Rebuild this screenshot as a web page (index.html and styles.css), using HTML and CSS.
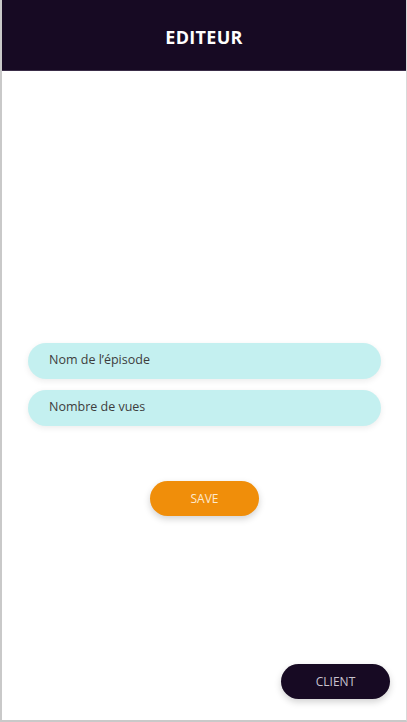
FILE: index.html
```html
<!DOCTYPE html>
<html lang="fr">
<head>
<meta charset="utf-8">
<title>Editeur</title>
<link rel="stylesheet" href="styles.css">
</head>
<body>
<div class="app">
  <header class="topbar"><h1 class="title">EDITEUR</h1></header>
  <main class="content">
    <form class="form">
      <input class="field" type="text" placeholder="Nom de l’épisode">
      <input class="field" type="text" placeholder="Nombre de vues">
      <button class="btn btn-save" type="button">SAVE</button>
    </form>
    <button class="btn btn-client" type="button">CLIENT</button>
  </main>
</div>
</body>
</html>
```
FILE: styles.css
```css
* { box-sizing: border-box; }
html, body { margin: 0; padding: 0; background: #fff; }
body { font-family: "Open Sans", "Noto Sans", sans-serif; }
.app {
  width: 407px;
  height: 722px;
  display: flex;
  flex-direction: column;
  border-left: 2px solid #c9c9c9;
  border-right: 1px solid #d9d9d9;
  border-bottom: 2px solid #c9c9c9;
}
.topbar {
  height: 71px;
  background: #170a23;
  border-bottom: 1px solid #3a2d48;
  display: flex;
  align-items: center;
  justify-content: center;
  padding-top: 3px;
}
.title {
  margin: 0;
  color: #fff;
  font-size: 18px;
  font-weight: 700;
  letter-spacing: 0.3px;
}
.content {
  flex: 1;
  display: flex;
  flex-direction: column;
  padding-top: 272px;
}
.form {
  display: flex;
  flex-direction: column;
  align-items: center;
  gap: 11px;
  padding: 0 25px 0 26px;
}
.field {
  width: 100%;
  height: 36px;
  border: none;
  border-radius: 18px;
  background: #c4f0f0;
  box-shadow: 0 2px 6px rgba(0,0,0,0.08);
  padding: 0 0 3px 21px;
  font-family: "Open Sans", sans-serif;
  font-size: 12.5px;
  color: #333;
  outline: none;
}
.field::placeholder { color: #3d3d3d; opacity: 1; }
.btn {
  width: 109px;
  height: 35px;
  border: none;
  border-radius: 18px;
  font-family: "Open Sans", sans-serif;
  font-size: 12px;
  font-weight: 400;
  box-shadow: 0 3px 7px rgba(0,0,0,0.18);
}
.btn-save {
  margin-top: 44px;
  background: #f08e0a;
  color: #fde9cf;
}
.btn-client {
  margin-top: auto;
  margin-bottom: 21px;
  margin-right: 16px;
  align-self: flex-end;
  background: #170a23;
  color: #c8c3cf;
}
```
